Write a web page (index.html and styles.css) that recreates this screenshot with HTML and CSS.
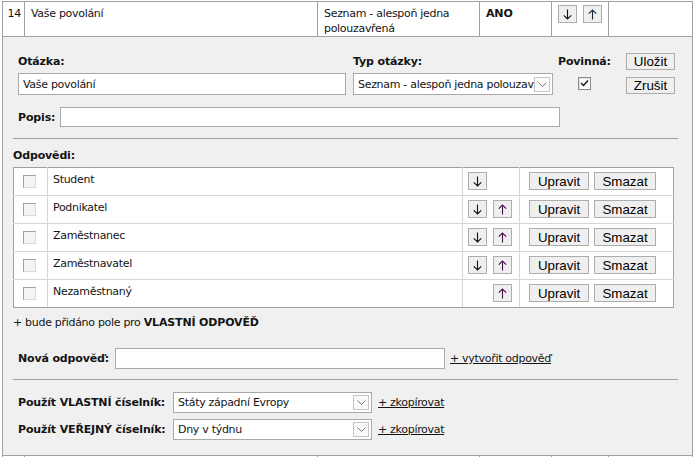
FILE: index.html
```html
<!DOCTYPE html>
<html lang="cs">
<head>
<meta charset="utf-8">
<title>Otázka</title>
<link rel="stylesheet" href="styles.css">
</head>
<body>
<table class="list">
  <colgroup>
    <col class="c-num"><col class="c-name"><col class="c-type"><col class="c-req"><col class="c-move"><col class="c-rest">
  </colgroup>
  <tr class="q-row">
    <td class="num">14</td>
    <td>Vaše povolání</td>
    <td>Seznam - alespoň jedna<br>polouzavřená</td>
    <td class="strong">ANO</td>
    <td class="move"><button class="btn arrow" aria-label="↓"><svg class="ico" width="9" height="11" viewBox="0 0 9 11"><path d="M4.5 0.5V10M0.8 6.3L4.5 10L8.2 6.3" fill="none" stroke="#111" stroke-width="1.1"/></svg></button><button class="btn arrow up" aria-label="↑"><svg class="ico" width="9" height="11" viewBox="0 0 9 11"><path d="M4.5 10.5V1M0.8 4.7L4.5 1L8.2 4.7" fill="none" stroke="#1b2a3a" stroke-width="1.1"/></svg></button></td>
    <td></td>
  </tr>
  <tr class="edit-row">
    <td colspan="6" class="edit">
      <div class="panel">
        <div class="head-grid">
          <div class="lbl">Otázka:</div>
          <div class="lbl">Typ otázky:</div>
          <div class="lbl">Povinná:</div>
          <button class="btn act">Uložit</button>
          <input class="field q-input" type="text" value="Vaše povolání">
          <div class="select type-select"><span class="sel-text">Seznam - alespoň jedna polouzavřená</span><span class="sel-btn"><svg width="9" height="5" viewBox="0 0 9 5"><polyline points="0.5,0.5 4.5,4.5 8.5,0.5" fill="none" stroke="#7a7a7a" stroke-width="1"/></svg></span></div>
          <span class="chk checked"><svg width="9" height="9" viewBox="0 0 9 9"><polyline points="1,4 3.5,6.5 8,1.5" fill="none" stroke="#111" stroke-width="1.4"/></svg></span>
          <button class="btn act second">Zrušit</button>
        </div>
        <div class="popis-row">
          <span class="lbl popis-lbl">Popis:</span>
          <input class="field popis-input" type="text" value="">
        </div>
        <div class="sep"></div>
        <div class="lbl answers-title">Odpovědi:</div>
        <table class="answers">
          <colgroup><col class="a-chk"><col class="a-text"><col class="a-move"><col class="a-act"></colgroup>
          <tr>
            <td class="cell-chk"><span class="chk off"></span></td>
            <td class="cell-text">Student</td>
            <td class="cell-move"><button class="btn arrow" aria-label="↓"><svg class="ico" width="9" height="11" viewBox="0 0 9 11"><path d="M4.5 0.5V10M0.8 6.3L4.5 10L8.2 6.3" fill="none" stroke="#111" stroke-width="1.1"/></svg></button></td>
            <td class="cell-act"><button class="btn act-sm">Upravit</button><button class="btn act-sm del">Smazat</button></td>
          </tr>
          <tr>
            <td class="cell-chk"><span class="chk off"></span></td>
            <td class="cell-text">Podnikatel</td>
            <td class="cell-move"><button class="btn arrow" aria-label="↓"><svg class="ico" width="9" height="11" viewBox="0 0 9 11"><path d="M4.5 0.5V10M0.8 6.3L4.5 10L8.2 6.3" fill="none" stroke="#111" stroke-width="1.1"/></svg></button><button class="btn arrow up" aria-label="↑"><svg class="ico" width="9" height="11" viewBox="0 0 9 11"><path d="M4.5 10.5V1M0.8 4.7L4.5 1L8.2 4.7" fill="none" stroke="#4a0f4a" stroke-width="1.1"/></svg></button></td>
            <td class="cell-act"><button class="btn act-sm">Upravit</button><button class="btn act-sm del">Smazat</button></td>
          </tr>
          <tr>
            <td class="cell-chk"><span class="chk off"></span></td>
            <td class="cell-text">Zaměstnanec</td>
            <td class="cell-move"><button class="btn arrow" aria-label="↓"><svg class="ico" width="9" height="11" viewBox="0 0 9 11"><path d="M4.5 0.5V10M0.8 6.3L4.5 10L8.2 6.3" fill="none" stroke="#111" stroke-width="1.1"/></svg></button><button class="btn arrow up" aria-label="↑"><svg class="ico" width="9" height="11" viewBox="0 0 9 11"><path d="M4.5 10.5V1M0.8 4.7L4.5 1L8.2 4.7" fill="none" stroke="#4a0f4a" stroke-width="1.1"/></svg></button></td>
            <td class="cell-act"><button class="btn act-sm">Upravit</button><button class="btn act-sm del">Smazat</button></td>
          </tr>
          <tr>
            <td class="cell-chk"><span class="chk off"></span></td>
            <td class="cell-text">Zaměstnavatel</td>
            <td class="cell-move"><button class="btn arrow" aria-label="↓"><svg class="ico" width="9" height="11" viewBox="0 0 9 11"><path d="M4.5 0.5V10M0.8 6.3L4.5 10L8.2 6.3" fill="none" stroke="#111" stroke-width="1.1"/></svg></button><button class="btn arrow up" aria-label="↑"><svg class="ico" width="9" height="11" viewBox="0 0 9 11"><path d="M4.5 10.5V1M0.8 4.7L4.5 1L8.2 4.7" fill="none" stroke="#4a0f4a" stroke-width="1.1"/></svg></button></td>
            <td class="cell-act"><button class="btn act-sm">Upravit</button><button class="btn act-sm del">Smazat</button></td>
          </tr>
          <tr>
            <td class="cell-chk"><span class="chk off"></span></td>
            <td class="cell-text">Nezaměstnaný</td>
            <td class="cell-move"><span class="arrow-gap"></span><button class="btn arrow up" aria-label="↑"><svg class="ico" width="9" height="11" viewBox="0 0 9 11"><path d="M4.5 10.5V1M0.8 4.7L4.5 1L8.2 4.7" fill="none" stroke="#4a0f4a" stroke-width="1.1"/></svg></button></td>
            <td class="cell-act"><button class="btn act-sm">Upravit</button><button class="btn act-sm del">Smazat</button></td>
          </tr>
        </table>
        <div class="note">+ bude přidáno pole pro <b>VLASTNÍ ODPOVĚĎ</b></div>
        <div class="form-row new-row">
          <span class="lbl new-lbl">Nová odpověď:</span>
          <input class="field new-input" type="text" value="">
          <a class="link" href="#">+ vytvořit odpověď</a>
        </div>
        <div class="sep sep2"></div>
        <div class="form-row dict-row">
          <span class="lbl dict-lbl">Použít VLASTNÍ číselník:</span>
          <div class="select dict-select"><span class="sel-text">Státy západní Evropy</span><span class="sel-btn"><svg width="9" height="5" viewBox="0 0 9 5"><polyline points="0.5,0.5 4.5,4.5 8.5,0.5" fill="none" stroke="#7a7a7a" stroke-width="1"/></svg></span></div>
          <a class="link" href="#">+ zkopírovat</a>
        </div>
        <div class="form-row dict-row second-dict">
          <span class="lbl dict-lbl">Použít VEŘEJNÝ číselník:</span>
          <div class="select dict-select"><span class="sel-text">Dny v týdnu</span><span class="sel-btn"><svg width="9" height="5" viewBox="0 0 9 5"><polyline points="0.5,0.5 4.5,4.5 8.5,0.5" fill="none" stroke="#7a7a7a" stroke-width="1"/></svg></span></div>
          <a class="link" href="#">+ zkopírovat</a>
        </div>
      </div>
    </td>
  </tr>
  <tr class="q-row next-row">
    <td></td><td></td><td></td><td></td><td></td><td></td>
  </tr>
</table>
</body>
</html>
```
FILE: styles.css
```css
html, body {
  margin: 0;
  padding: 0;
  background: #ffffff;
}
body {
  font-family: "DejaVu Sans", sans-serif;
  font-size: 11px;
  line-height: 15px;
  letter-spacing: -0.3px;
  color: #141414;
}
b, .strong, .lbl { font-weight: bold; letter-spacing: -0.15px; }
.list {
  border-collapse: collapse;
  table-layout: fixed;
  width: 690px;
  margin: 1px 0 0 2px;
}
.c-num { width: 22px; }
.c-name { width: 293px; }
.c-type { width: 162px; }
.c-req { width: 72px; }
.c-move { width: 57px; }
.c-rest { width: 84px; }
.list > tbody > tr > td {
  border: 1px solid #a0a0a0;
  padding: 4px 6px 0 6px;
  vertical-align: top;
}
.q-row > td { height: 35px; box-sizing: border-box; }
.list td.num { text-align: right; padding-right: 3px; padding-left: 0; }
.list td.move { padding: 3px 0 0 6px; }
.list td.edit { padding: 0; }
.next-row > td { height: 20px; }

.panel {
  background: #f0f0f0;
  padding: 15px 12px 15px 10px;
}

.lbl { color: #141414; }

.head-grid {
  margin-left: 5px;
  display: grid;
  grid-template-columns: 335px 205px 68px 49px;
  grid-template-rows: 18px 22px;
  row-gap: 3px;
  align-items: center;
}

.btn {
  font-family: "Liberation Sans", Arial, sans-serif;
  font-size: 13.33px;
  line-height: 15px;
  letter-spacing: 0;
  color: #000;
  background: #efefef;
  border: 1px solid #adadad;
  border-radius: 0;
  padding: 0;
  margin: 0;
  box-sizing: border-box;
  height: 18px;
  text-align: center;
  vertical-align: top;
}
.btn.act { width: 49px; height: 17px; }
.btn.act.second { align-self: start; margin-top: 4px; }
.btn.arrow {
  width: 19px;
  margin-right: 6px;
  display: inline-flex;
  align-items: center;
  justify-content: center;
}
.ico { display: block; }
.arrow-gap { display: inline-block; width: 25px; height: 18px; vertical-align: top; }
.btn.act-sm { height: 18px; width: 60px; margin-right: 5px; }
.btn.act-sm.del { width: 62px; margin-right: 0; }

.field {
  font-family: inherit;
  font-size: 11px;
  letter-spacing: -0.3px;
  color: #141414;
  background: #fff;
  border: 1px solid #a9a9a9;
  box-sizing: border-box;
  margin: 0;
  padding: 0 4px;
  outline: none;
}
.q-input { width: 328px; height: 22px; }

.select {
  display: flex;
  align-items: center;
  background: #fff;
  border: 1px solid #a9a9a9;
  box-sizing: border-box;
  overflow: hidden;
}
.sel-text {
  flex: 1;
  white-space: nowrap;
  overflow: hidden;
  padding-left: 4px;
}
.sel-btn {
  flex: none;
  width: 16px;
  height: 15px;
  margin-right: 2px;
  border: 1px solid #c6c6c6;
  box-sizing: border-box;
  display: flex;
  align-items: center;
  justify-content: center;
  background: #fafafa;
}
.type-select { width: 200px; height: 22px; }

.chk {
  display: inline-block;
  width: 13px;
  height: 13px;
  box-sizing: border-box;
}
.chk.checked {
  margin-left: 20px;
  margin-top: -1px;
  border: 1px solid #8c8c8c;
  background: #fff;
  display: flex;
  align-items: center;
  justify-content: center;
  box-shadow: inset 1px 1px 0 #e2e2e2;
}
.chk.off {
  border-style: solid;
  border-width: 1px;
  border-color: #a0a0a0 #dadada #dadada #a0a0a0;
  background: #f4f4f4;
}

.popis-row {
  margin: 12px 0 0 5px;
  display: flex;
  align-items: center;
}
.popis-lbl { width: 42px; }
.popis-input { width: 500px; height: 20px; }

.sep {
  margin-top: 11px;
  width: 665px;
  border-top: 1px solid #a0a0a0;
}
.answers-title { margin-top: 9px; }

.answers {
  margin-top: 4px;
  width: 660px;
  border-collapse: collapse;
  table-layout: fixed;
  background: #fff;
  border: 1px solid #a0a0a0;
}
.a-chk { width: 34px; }
.a-text { width: 415px; }
.a-move { width: 57px; }
.a-act { width: 154px; }
.answers td {
  border: 1px solid #d6d6d6;
  height: 28px;
  box-sizing: border-box;
  vertical-align: top;
  padding: 0;
}
.answers tr:first-child td { border-top: 1px solid #a0a0a0; }
.answers tr:last-child td { border-bottom: 1px solid #a0a0a0; }
.answers td:first-child { border-left: 1px solid #a0a0a0; }
.answers td:last-child { border-right: 1px solid #a0a0a0; }
.cell-chk { padding: 7px 0 0 9px !important; }
.cell-text { padding: 4px 5px 0 5px !important; }
.cell-move { padding: 4px 0 0 5px !important; }
.cell-act { padding: 4px 0 0 9px !important; }

.note { margin-top: 7px; }

.form-row {
  display: flex;
  align-items: center;
  margin-left: 5px;
}
.new-row { margin-top: 18px; }
.new-lbl { width: 97px; }
.new-input { width: 330px; height: 21px; }
.link {
  color: #141414;
  text-decoration: underline;
  margin-left: 5px;
}
.sep2 { margin-top: 10px; }
.dict-row { margin-top: 12px; }
.second-dict { margin-top: 6px; }
.dict-lbl { width: 155px; }
.dict-select { width: 199px; height: 21px; }
.dict-row .link { margin-left: 6px; }
```
